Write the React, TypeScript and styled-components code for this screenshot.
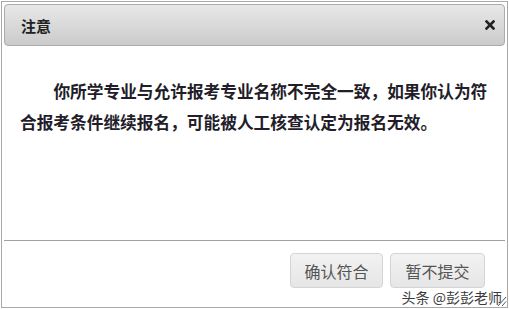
import React from "react";
import styled, { createGlobalStyle } from "styled-components";

const Global = createGlobalStyle`
  html, body { margin: 0; padding: 0; background: #fff; }
  body { font-family: "Liberation Sans", "Noto Sans CJK SC", sans-serif; }
`;

const Page = styled.div`
  padding: 1px;
  position: relative;
  width: 509px;
  height: 309px;
  box-sizing: border-box;
`;

const Dialog = styled.div`
  position: relative;
  width: 507px;
  height: 307px;
  box-sizing: border-box;
  border: 1px solid #a9a9a9;
  padding: 2px;
  background: #fff;
  display: flex;
  flex-direction: column;
`;

const TitleBar = styled.div`
  height: 42px;
  box-sizing: border-box;
  border: 1px solid #ababab;
  border-radius: 4px;
  background: linear-gradient(#e8e8e8, #cbcbcb);
  display: flex;
  align-items: center;
  justify-content: space-between;
  padding: 0 9px 0 16px;
`;

const Title = styled.span`
  font-family: "Noto Sans CJK SC", sans-serif;
  font-weight: 700;
  font-size: 15px;
  color: #222;
`;

const Close = styled.span`
  display: flex;
  width: 10px;
  height: 10px;
`;

const Content = styled.div`
  flex: 1;
  padding: 30px 3px 0 16px;
`;

const Message = styled.p`
  margin: 0;
  font-family: "Noto Sans CJK SC", sans-serif;
  font-weight: 700;
  font-size: 16.7px;
  line-height: 31px;
  text-indent: 2em;
  color: #231d2a;
`;

const Footer = styled.div`
  border-top: 1px solid #a0a0a0;
  padding: 12px 20px 0 0;
  height: 65px;
  box-sizing: border-box;
  display: flex;
  justify-content: flex-end;
  align-items: flex-start;
  gap: 7px;
`;

const Button = styled.button<{ $w: number }>`
  width: ${(p) => p.$w}px;
  height: 35px;
  border: 1px solid #d4d4d4;
  border-radius: 4px;
  background: linear-gradient(#f2f2f2, #e6e6e6);
  font-family: "Noto Sans CJK SC", sans-serif;
  font-size: 16px;
  color: #555;
  padding: 0;
`;

const Watermark = styled.span`
  position: absolute;
  right: 5px;
  bottom: 2px;
  font-family: "Noto Sans CJK SC", sans-serif;
  font-size: 14px;
  line-height: 16px;
  color: #3a3a3a;
  text-shadow: 0 0 2px #fff, 0 0 2px #fff;
`;

const Grip = styled.svg`
  position: absolute;
  right: 0;
  bottom: 0;
`;

export default function App() {
  return (
    <Page>
      <Global />
      <Dialog>
        <TitleBar>
          <Title>注意</Title>
          <Close>
            <svg width="10" height="10" viewBox="0 0 10 10">
              <path d="M1.5 1.5 L8.5 8.5 M8.5 1.5 L1.5 8.5" stroke="#222" strokeWidth="2.6" strokeLinecap="square" />
            </svg>
          </Close>
        </TitleBar>
        <Content>
          <Message>
            你所学专业与允许报考专业名称不完全一致，如果你认为符合报考条件继续报名，可能被人工核查认定为报名无效。
          </Message>
        </Content>
        <Footer>
          <Button $w={93}>确认符合</Button>
          <Button $w={95}>暂不提交</Button>
        </Footer>
        <Watermark>头条 @彭彭老师</Watermark>
        <Grip width="10" height="12" viewBox="0 0 10 12">
          <path d="M1 11 L9 2 M5 11 L9 6.5" stroke="#555" strokeWidth="1" />
        </Grip>
      </Dialog>
    </Page>
  );
}
